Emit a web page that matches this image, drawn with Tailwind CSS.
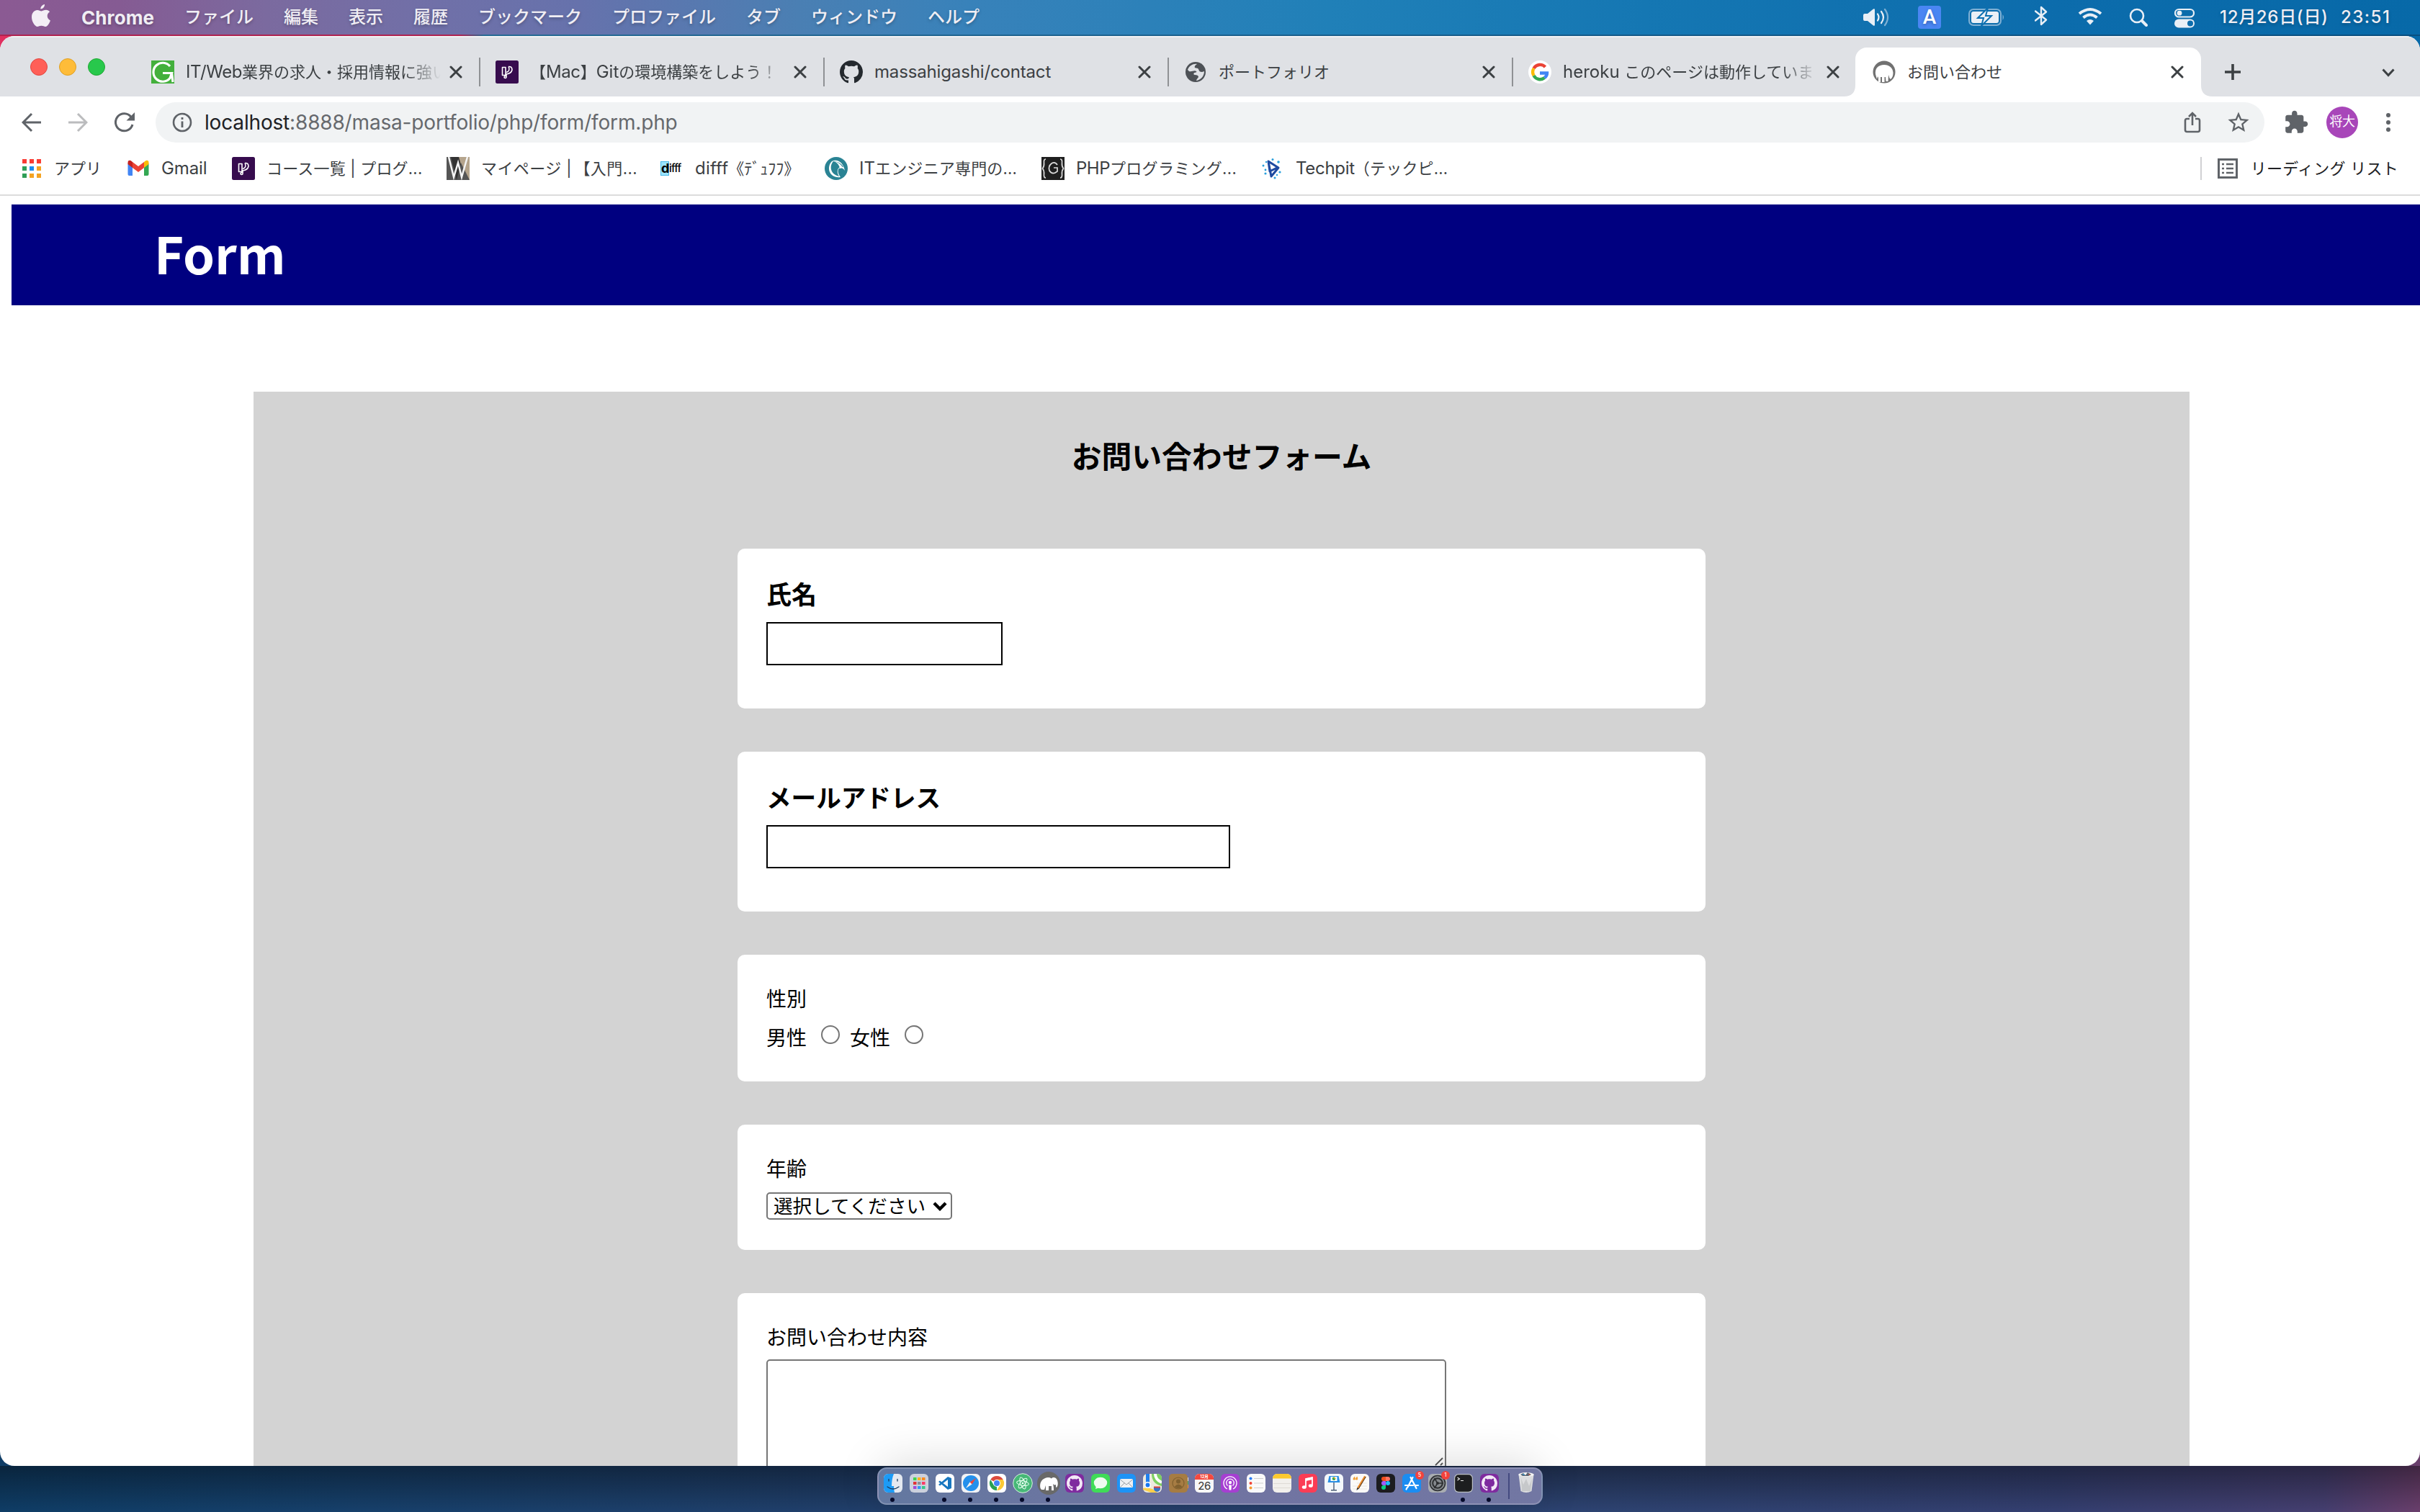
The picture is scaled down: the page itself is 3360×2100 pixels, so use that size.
<!DOCTYPE html>
<html lang="ja">
<head>
<meta charset="utf-8">
<title>お問い合わせ</title>
<script src="https://cdn.jsdelivr.net/npm/@tailwindcss/browser@4"></script>
</head>
<body class="w-[3360px] h-[2100px] overflow-hidden font-['Inter','Noto_Sans_CJK_JP',sans-serif]">
<svg class="hidden">
  <symbol id="x" viewBox="0 0 18 18"><path d="M2 2l14 14M16 2L2 16" stroke="#3c4043" stroke-width="3" stroke-linecap="round" fill="none"/></symbol>
  <symbol id="octocat" viewBox="0 0 16 16"><path fill="currentColor" d="M8 0C3.58 0 0 3.58 0 8c0 3.54 2.29 6.53 5.47 7.59.4.07.55-.17.55-.38 0-.19-.01-.82-.01-1.49-2.01.37-2.53-.49-2.69-.94-.09-.23-.48-.94-.82-1.13-.28-.15-.68-.52-.01-.53.63-.01 1.08.58 1.23.82.72 1.21 1.87.87 2.33.66.07-.52.28-.87.51-1.07-1.78-.2-3.64-.89-3.64-3.95 0-.87.31-1.59.82-2.15-.08-.2-.36-1.02.08-2.12 0 0 .67-.21 2.2.82.64-.18 1.32-.27 2-.27s1.36.09 2 .27c1.53-1.04 2.2-.82 2.2-.82.44 1.1.16 1.92.08 2.12.51.56.82 1.27.82 2.15 0 3.07-1.87 3.75-3.65 3.95.29.25.54.73.54 1.48 0 1.07-.01 1.93-.01 2.2 0 .21.15.46.55.38A8.01 8.01 0 0016 8c0-4.42-3.58-8-8-8z"/></symbol>
  <symbol id="progate" viewBox="0 0 32 32"><rect width="32" height="32" rx="2.5" fill="#370c4e"/><path d="M9.500 9.500h4.500v11h-4.500zM14 9.500v11l-2 2.500q0 1.500 1.500 1.500T15 23v-4q7-1 8-6 0-5-5-4.500" fill="none" stroke="#fff" stroke-width="1.600" stroke-linejoin="round"/><path d="M18 8.500q3 6-3 8" fill="none" stroke="#fff" stroke-width="1.500"/></symbol>
</svg>
<div class="w-full h-full flex flex-col bg-[linear-gradient(90deg,#0f3d66_0%,#16406b_14%,#233f6b_40%,#2c4472_62%,#343f70_85%,#453f70_96%,#6a3f6c_100%)]">

  <!-- menu bar -->
  <header class="h-12 shrink-0 flex items-center text-[#f0eef4] text-[24px] bg-[linear-gradient(90deg,#8b5a93_0%,#855b93_5%,#7b6a9f_11%,#7070a8_18%,#6672ac_24%,#4a7fb3_33%,#3882ba_40%,#2080b8_55%,#1577b3_68%,#0c6cac_85%,#0769a8_100%)] whitespace-nowrap font-medium [text-shadow:0_2px_4px_rgba(0,0,0,.25)]">
    <svg class="w-[26px] h-[32px] ml-[44px] mr-[43px] -mt-[4px]" viewBox="0 0 26 32"><path fill="#f3eef5" d="M18 0c.3 3-2.400 6.500-5.600 6.500C12 3.500 15 .4 18 0zM25 10.600c-5 3-4 9.800.9 11.800C24.600 26.500 21.700 31 19 31c-2 0-3-1.200-5.600-1.200C10.800 29.800 9.700 31 8 31 4.600 31 0 24.500 0 17.800 0 11.500 4 8 7.800 8c2.400 0 4 1.400 5.800 1.400C15.300 9.400 17 7.800 20 7.800c2 0 4 1 5 2.800z"/></svg>
    <span class="w-[143px] font-bold text-[26px] tracking-[0.100px]">Chrome</span>
    <nav class="flex gap-[42px]"><span>ファイル</span><span>編集</span><span>表示</span><span>履歴</span><span>ブックマーク</span><span>プロファイル</span><span>タブ</span><span>ウィンドウ</span><span>ヘルプ</span></nav>
    <div class="ml-auto flex items-center pr-[37px] -mt-px">
      <svg class="w-[38px] h-[28px] mr-[38px]" viewBox="0 0 38 28"><path d="M0 11a2 2 0 012-2h4l8-6.500q2-1 2 1v21q0 2-2 1L6 19H2a2 2 0 01-2-2z" fill="#e9eff6"/><path d="M20 9.500q3 4.500 0 9M25 6q6 8 0 16" fill="none" stroke="#e9eff6" stroke-width="2.200" stroke-linecap="round"/><path d="M30 3q8 11 0 22" fill="none" stroke="#7fb0d4" stroke-width="2.200" stroke-linecap="round"/></svg>
      <span class="w-8 h-8 rounded-[4px] bg-[#4a86f3] text-white text-[28px] leading-8 text-center mr-[38px] font-['Roboto']">A</span>
      <svg class="w-[52px] h-[26px] mr-[40px]" viewBox="0 0 52 26"><rect x="1" y="2" width="44" height="22" rx="6" fill="none" stroke="#7fb0d4" stroke-width="2"/><rect x="4" y="5" width="38" height="16" rx="3" fill="#e9eff6"/><path d="M47.500 9q3 4 0 8z" fill="#7fb0d4"/><path d="M27 0L13 14h8l-3 11L32 11h-8z" fill="#e9eff6" stroke="#0c6fb0" stroke-width="2"/></svg>
      <svg class="w-[18px] h-[28px] mr-[42px] -mt-[4px]" viewBox="0 0 18 28"><path d="M1 7.500l15 12-7 6.500V2l7 6.500-15 12" fill="none" stroke="#e9eff6" stroke-width="2.400" stroke-linejoin="round" stroke-linecap="round"/></svg>
      <svg class="w-[34px] h-[26px] mr-[37px] -mt-[2px]" viewBox="0 0 34 26"><g fill="none" stroke="#e9eff6" stroke-width="4"><path d="M2 9q15-12 30 0"/><path d="M7.500 14.500q9.500-8 19 0"/></g><path d="M12 19q5-4 10 0l-5 5.500z" fill="#e9eff6"/></svg>
      <svg class="w-[26px] h-[26px] mr-[37px]" viewBox="0 0 26 26"><circle cx="11" cy="11" r="9" fill="none" stroke="#e9eff6" stroke-width="2.600"/><path d="M18 18l6 6" stroke="#e9eff6" stroke-width="4" stroke-linecap="round"/></svg>
      <svg class="w-[28px] h-[28px] mr-[35px] mt-[2px]" viewBox="0 0 28 28"><rect x="1" y="2" width="26" height="10.500" rx="5.200" fill="none" stroke="#e9eff6" stroke-width="2.200"/><circle cx="7" cy="7.200" r="3.400" fill="#e9eff6"/><rect y="15.500" width="28" height="12" rx="6" fill="#e9eff6"/><circle cx="22" cy="21.500" r="4" fill="#0c6cac"/></svg>
      <span class="w-[168px] tracking-[0.700px]">12月26日(日)</span><span class="w-[73px] tracking-[1.500px]">23:51</span>
    </div>
  </header>
  <div class="h-[2px] shrink-0 bg-[linear-gradient(90deg,#b02350_0%,#b02350_19%,#266a94_20%,#0a4f80_100%)]"></div>

  <div class="h-[1986px] shrink-0 bg-[linear-gradient(90deg,#e03060_0,#e03060_30px,#0769a8_31px)] [background-size:100%_30px] bg-no-repeat">
  <!-- browser window -->
  <div class="h-full flex flex-col overflow-hidden rounded-[20px] bg-white">
    <!-- tab strip -->
    <div class="h-[84px] shrink-0 flex bg-[#dfe1e5] border-t-2 border-[#f1f1f3] text-[22px] text-[#3c4043] whitespace-nowrap">
      <div class="w-[210px] flex gap-4 pl-[42px] pt-[29px]">
        <i class="w-6 h-6 rounded-full bg-[#ff5f57] border border-[#e14640]"></i><i class="w-6 h-6 rounded-full bg-[#febc39] border border-[#dfa023]"></i><i class="w-6 h-6 rounded-full bg-[#28c84c] border border-[#1fa833]"></i>
      </div>
      <div class="w-[478px] flex items-center pt-[14px] h-[82px]">
        <svg class="w-8 h-8 shrink-0" viewBox="0 0 32 32"><path fill="#43b03c" d="M0 0h32v32H0z"/><path d="M26 8A13 13 0 1026 24.500L28.500 17.500H16M28.500 17.500L30 30" fill="none" stroke="#fff" stroke-width="3.200"/></svg>
        <div class="ml-4 w-[354px] overflow-hidden [mask-image:linear-gradient(90deg,#000_86%,transparent)]"><span class="text-[24px] tracking-[-0.400px]">IT/Web</span>業界の求人・採用情報に強い</div>
        <svg class="w-[18px] h-[18px] shrink-0 ml-3 mr-[23px]"><use href="#x"/></svg><i class="w-[2px] h-10 bg-[#8f9194]"></i>
      </div>
      <div class="w-[478px] flex items-center pt-[14px] h-[82px]">
        <svg class="w-8 h-8 shrink-0"><use href="#progate"/></svg>
        <div class="ml-4 w-[354px] overflow-hidden [mask-image:linear-gradient(90deg,#000_86%,transparent)]">【<span class="text-[24px] tracking-[-0.400px]">Mac</span>】<span class="text-[24px]">Git</span>の環境構築をしよう！</div>
        <svg class="w-[18px] h-[18px] shrink-0 ml-3 mr-[23px]"><use href="#x"/></svg><i class="w-[2px] h-10 bg-[#8f9194]"></i>
      </div>
      <div class="w-[478px] flex items-center pt-[14px] h-[82px]">
        <svg class="w-8 h-8 shrink-0 text-[#24292e]"><use href="#octocat"/></svg>
        <div class="ml-4 w-[354px] text-[24px] tracking-[-0.150px]">massahigashi/contact</div>
        <svg class="w-[18px] h-[18px] shrink-0 ml-3 mr-[23px]"><use href="#x"/></svg><i class="w-[2px] h-10 bg-[#8f9194]"></i>
      </div>
      <div class="w-[478px] flex items-center pt-[14px] h-[82px]">
        <svg class="w-8 h-8 shrink-0" viewBox="0 0 32 32"><circle cx="16" cy="16" r="14" fill="#4d5156"/><path d="M18 5c-2 1-4 3-3 5 2 1 4 0 5 2 1 3 2 4 5 4l3-1c0 7-5 12-11 13 0-2 2-3 3-5 0-2-2-3-5-3-2 0-2-2-1-3 2 0 4-1 3-2-3-2-6 1-10 0L5 13C7 7 13 4 18 5z" fill="#dfe1e5"/></svg>
        <div class="ml-4 w-[354px]">ポートフォリオ</div>
        <svg class="w-[18px] h-[18px] shrink-0 ml-3 mr-[23px]"><use href="#x"/></svg><i class="w-[2px] h-10 bg-[#8f9194]"></i>
      </div>
      <div class="w-[478px] flex items-center pt-[14px] h-[82px]">
        <svg class="w-8 h-8 shrink-0" viewBox="0 0 32 32"><circle cx="16" cy="16" r="16" fill="#fff"/><g fill="none" stroke-width="4.400"><path d="M23.500 9A10 10 0 007.500 11" stroke="#ea4335"/><path d="M7.500 11a10 10 0 000 10" stroke="#fbbc05"/><path d="M7.500 21a10 10 0 0015 3" stroke="#34a853"/><path d="M22.500 24c2.500-2 3.500-4 3.500-6.500H16" stroke="#4285f4"/></g></svg>
        <div class="ml-4 w-[354px] overflow-hidden [mask-image:linear-gradient(90deg,#000_86%,transparent)]"><span class="text-[24px]">heroku </span>このページは動作していま</div>
        <svg class="w-[18px] h-[18px] shrink-0 ml-3"><use href="#x"/></svg>
      </div>
      <div class="flex items-end -ml-[40px] mt-[14px] h-[68px]">
        <svg class="w-4 h-4" viewBox="0 0 16 16"><path d="M16 0v16H0Q16 16 16 0z" fill="#fff"/></svg>
        <div class="w-[480px] h-[68px] bg-white rounded-t-[16px] flex items-center pl-6">
          <svg class="w-8 h-8" viewBox="0 0 32 32"><circle cx="16" cy="16" r="15.500" fill="#717171"/><path d="M4 19c-1-8 4-13 12-13 7 0 12 4 12.500 11 0 4-1 7-3.500 9-2-1-2-4-3-6l-.5 9h-3l-.5-6h-1.500v7h-3.500v-7h-2v7h-3v-6l-1-2-1 4z" fill="#fff"/></svg>
          <div class="ml-4 w-[354px]">お問い合わせ</div>
          <svg class="w-[18px] h-[18px] ml-3"><use href="#x"/></svg>
        </div>
        <svg class="w-4 h-4" viewBox="0 0 16 16"><path d="M0 0v16h16Q0 16 0 0z" fill="#fff"/></svg>
      </div>
      <svg class="w-6 h-6 mt-[36px] ml-4" viewBox="0 0 24 24"><path d="M12 1v22M1 12h22" stroke="#3c4043" stroke-width="3.600"/></svg>
      <svg class="w-[18px] h-3 mt-[43px] ml-[195px]" viewBox="0 0 18 12"><path d="M1.500 1.500L9 9.500l7.500-8" stroke="#3c4043" stroke-width="3" fill="none"/></svg>
    </div>

    <!-- toolbar -->
    <div class="h-[72px] shrink-0 flex items-center">
      <svg class="w-7 h-7 ml-[30px] mr-[36px]" viewBox="0 0 28 28"><path d="M27 14H3M14 2L2 14l12 12" stroke="#5f6368" stroke-width="3" fill="none"/></svg>
      <svg class="w-7 h-7 mr-[37px]" viewBox="0 0 28 28"><path d="M1 14h24M14 2l12 12-12 12" stroke="#bbbcbe" stroke-width="3" fill="none"/></svg>
      <svg class="w-7 h-7 mr-[29px]" viewBox="0 0 28 28"><path d="M23 6.500A12 12 0 1025 17" stroke="#5f6368" stroke-width="3" fill="none"/><path d="M28 0v11.500H16.500z" fill="#5f6368"/></svg>
      <div class="w-[2928px] h-14 rounded-full bg-[#f1f3f4] flex items-center">
        <svg class="w-7 h-7 ml-[23px] mr-[17px]" viewBox="0 0 28 28"><circle cx="14" cy="14" r="12" fill="none" stroke="#5f6368" stroke-width="2.600"/><path d="M14 12.500V21M14 7v3" stroke="#5f6368" stroke-width="2.800"/></svg>
        <span class="text-[28px] text-[#66696d] tracking-[-0.170px]"><span class="text-[#202124]">localhost</span>:8888/masa-portfolio/php/form/form.php</span>
        <svg class="w-[24px] h-[30px] ml-auto mr-[36px]" viewBox="0 0 24 30"><path d="M8 10H4.500Q2 10 2 12.500v13Q2 28 4.500 28h15q2.500 0 2.500-2.500v-13Q22 10 19.500 10H16M12 19V3M7 7l5-5 5 5" fill="none" stroke="#5f6368" stroke-width="2.600"/></svg>
        <svg class="w-[32px] h-[32px] mr-[20px]" viewBox="1 1 22 22"><path fill="#5f6368" d="M22 9.240l-7.190-.62L12 2 9.190 8.630 2 9.240l5.460 4.730L5.820 21 12 17.270 18.180 21l-1.630-7.030L22 9.240zM12 15.400l-3.760 2.270 1-4.280-3.320-2.880 4.380-.38L12 6.100l1.710 4.040 4.380.38-3.320 2.880 1 4.280L12 15.400z"/></svg>
      </div>
      <svg class="w-[34px] h-[34px] ml-[27px]" viewBox="0.500 0.500 23 23"><path fill="#5f6368" d="M20.500 11H19V7c0-1.100-.9-2-2-2h-4V3.500C13 2.120 11.880 1 10.500 1S8 2.120 8 3.500V5H4c-1.100 0-1.990.9-1.990 2v3.800H3.500c1.490 0 2.700 1.210 2.700 2.700s-1.210 2.700-2.700 2.700H2V20c0 1.100.9 2 2 2h3.800v-1.500c0-1.490 1.210-2.700 2.700-2.700 1.490 0 2.700 1.210 2.700 2.700V22H17c1.100 0 2-.9 2-2v-4h1.500c1.380 0 2.500-1.120 2.500-2.500S21.880 11 20.500 11z"/></svg>
      <span class="ml-[25px] w-11 h-11 rounded-full bg-[#a846b9] text-white text-[18px] leading-[42px] text-center tracking-[-0.500px]">将大</span>
      <svg class="w-[6px] h-[28px] ml-[39px]" viewBox="0 0 6 28"><g fill="#5f6368"><circle cx="3" cy="4" r="3"/><circle cx="3" cy="14" r="3"/><circle cx="3" cy="24" r="3"/></g></svg>
    </div>

    <!-- bookmarks bar -->
    <div class="h-[66px] shrink-0 flex items-center pb-[8px] border-b-2 border-[#dcdcdc] text-[22px] text-[#3c4043] whitespace-nowrap pl-[31px]">
      <div class="flex items-center w-[145px]"><svg class="w-[26px] h-[26px] mr-[18px]" viewBox="0 0 26 26"><path fill="#f93c34" d="M0 0h6v6H0zM10 0h6v6h-6zM20 0h6v6h-6z"/><path fill="#2f9e57" d="M0 10h6v6H0zM0 20h6v6H0z"/><path fill="#1a8cf0" d="M10 10h6v6h-6z"/><path fill="#f4a322" d="M20 10h6v6h-6zM10 20h6v6h-6zM20 20h6v6h-6z"/></svg>アプリ</div>
      <div class="flex items-center w-[146px]"><svg class="w-[32px] h-[24px] mr-[16px]" viewBox="0 0 32 24"><path fill="#4285f4" d="M1.500 5v15q0 2 2 2H8V10z"/><path fill="#34a853" d="M30.500 5v15q0 2-2 2H24V10z"/><path fill="#ea4335" d="M8 3v8l8 6 8-6V3l-8 6z"/><path fill="#c5221f" d="M1.500 4q0-4 4-3L8 3v8L1.500 6z"/><path fill="#fbbc04" d="M30.500 4q0-4-4-3L24 3v8l6.500-5z"/></svg><span class="text-[24px] tracking-[-0.100px]">Gmail</span></div>
      <div class="flex items-center w-[298px]"><svg class="w-8 h-8 mr-4"><use href="#progate"/></svg><span class="tracking-[0.200px]">コース一覧<span class="whitespace-pre"> | </span>プログ...</span></div>
      <div class="flex items-center w-[297px]"><svg class="w-8 h-8 mr-4" viewBox="0 0 32 32"><path fill="#333" d="M0 0h32v32H0z"/><path d="M17 0h15v32h-6z" fill="#b5a48c"/><path fill="#555" d="M0 0h6L14 32H0zM20 8l12 24H14z"/><path d="M3 0l7 28 6-20 5 20 8-28" fill="none" stroke="#f4f4f4" stroke-width="2.500"/></svg><span class="tracking-[0.400px]">マイページ<span class="whitespace-pre"> | </span><span class="-ml-[3px]">【入門...</span></span></div>
      <div class="flex items-center w-[228px]"><span class="w-[32px] mr-[16px] text-black flex items-center text-[15px] leading-[20px] tracking-[-0.800px]"><b class="bg-[#9be4ff] border border-[#49b9e6] w-[12px] shrink-0 text-[18px] h-[20px] leading-[17px]">d</b><span class="font-medium">ifff</span></span><span class="text-[24px] tracking-[0.200px]">difff</span>《ﾃﾞｭﾌﾌ》</div>
      <div class="flex items-center w-[301px]"><svg class="w-8 h-8 mr-4" viewBox="0 0 32 32"><circle cx="16" cy="16" r="16" fill="#2a8394"/><path d="M22 28C6 30 2 14 10 6c8-4 16 2 18 13-2-3-4-4-6-4-5 1-4 8 0 13z" fill="#fff"/><path d="M20 27C8 24 6 13 12 6c7 0 12 4 14 8-7-2-11 5-6 13z" fill="#2a8394"/><path d="M13 6q9 2 12 9l-4 1Q20 9 13 6z" fill="#fff"/></svg><span class="text-[24px]">IT</span><span class="tracking-[0.200px]">エンジニア専門の...</span></div>
      <div class="flex items-center w-[305px]"><svg class="w-8 h-8 mr-4" viewBox="0 0 32 32"><path fill="#1f1f1f" d="M0 0h32v32H0z"/><path d="M6 3Q3 3 3.500 8t-2 8q2.500 3 2 8t2.500 5M26 3q3 0 2.500 5t2 8q-2.500 3-2 8t-2.500 5M22 11q-3-5-8-2-5 4-3 10 3 5 8 3l3-2v-5h-5" fill="none" stroke="#ddd" stroke-width="1.700"/></svg><span class="text-[24px] tracking-[-0.500px]">PHP</span><span class="tracking-[0.300px]">プログラミング...</span></div>
      <div class="flex items-center"><svg class="w-8 h-8 mr-4" viewBox="0 0 32 32"><path d="M10 6l14 9-10 12zM10 6l2 14 10-5" fill="none" stroke="#1f4aa0" stroke-width="3" stroke-linejoin="round"/><g fill="#2aa0dc"><circle cx="16" cy="3.500" r="1.500"/><circle cx="24" cy="7" r="1.800"/><circle cx="3" cy="12" r="1.500"/><circle cx="6" cy="18" r="1.400"/><circle cx="7" cy="7" r="1.200"/><circle cx="26" cy="21" r="1.600"/><circle cx="6" cy="23" r="1.600"/><circle cx="19" cy="29" r="1.500"/><circle cx="22" cy="25" r="1.200"/></g></svg><span class="text-[24px] tracking-[-0.300px]">Techpit</span><span class="tracking-[0.200px] -ml-px">（テックピ...</span></div>
      <div class="ml-auto flex items-center text-[#202124] pr-[30px]"><i class="w-[2px] h-8 bg-[#d0d1d3] mr-[22px]"></i><svg class="w-7 h-7 mr-[18px]" viewBox="0 0 28 28"><rect x="1.500" y="1.500" width="25" height="25" fill="none" stroke="#5f6368" stroke-width="3"/><path d="M6 8h3M6 14h3M6 20h3M12 8h10M12 14h10M12 20h10" stroke="#5f6368" stroke-width="2.600"/></svg><span class="tracking-[0.250px]">リーディング リスト</span></div>
    </div>

    <!-- page -->
    <main class="flex-1 overflow-hidden pl-4 pt-3 text-black font-['Noto_Sans_CJK_JP',sans-serif]">
      <div class="h-[140px] bg-[#000080] flex items-center pl-[198px] text-white font-bold text-[70.500px] leading-[140px]"><h1 class="-mt-[8px]">Form</h1></div>
      <form class="mt-[120px] ml-[336px] w-[2688px] h-[1600px] bg-[#d3d3d3] pt-[58px] flex flex-col items-center text-[28px] leading-10">
        <h2 class="h-[60px] shrink-0 leading-[60px] mb-[100px] text-[41.800px] font-bold">お問い合わせフォーム</h2>
        <section class="w-[1344px] h-[222px] shrink-0 bg-white rounded-[10px] px-10 pt-[38px] mb-[60px]">
          <h3 class="h-12 leading-[48px] text-[35px] font-bold mb-[16px]">氏名</h3>
          <input class="block w-[328px] h-[60px] border-2 border-black bg-white">
        </section>
        <section class="w-[1344px] h-[222px] shrink-0 bg-white rounded-[10px] px-10 pt-[38px] mb-[60px]">
          <h3 class="h-12 leading-[48px] text-[34.600px] font-bold mb-[16px]">メールアドレス</h3>
          <input class="block w-[644px] h-[60px] border-2 border-black bg-white">
        </section>
        <section class="w-[1344px] h-[176px] shrink-0 bg-white rounded-[10px] px-10 pt-10 mb-[60px]">
          <p class="h-10 mb-[14px]">性別</p>
          <div class="flex h-10"><span class="w-[76px]">男性</span><i class="w-[26px] h-[26px] mt-[4px] mr-[14px] rounded-full border-2 border-[#767676] bg-white"></i><span class="w-[76px]">女性</span><i class="w-[26px] h-[26px] mt-[4px] rounded-full border-2 border-[#767676] bg-white"></i></div>
        </section>
        <section class="w-[1344px] h-[174px] shrink-0 bg-white rounded-[10px] px-10 pt-10 mb-[60px]">
          <p class="h-10 mb-[14px]">年齢</p>
          <div class="w-[258px] h-[38px] border-2 border-[#767676] rounded-[5px] flex items-center pl-2 text-[26.600px] leading-[34px] whitespace-nowrap"><span class="w-[221px] -mt-[2px]">選択してください</span><svg class="w-[20px] h-[14px]" viewBox="0 0 20 14"><path d="M2 3l8 8 8-8" fill="none" stroke="#000" stroke-width="4.400"/></svg></div>
        </section>
        <section class="w-[1344px] h-[600px] shrink-0 bg-white rounded-[10px] px-10 pt-10">
          <p class="h-10 mb-3">お問い合わせ内容</p>
          <div class="w-[944px] h-[152px] border-2 border-[#767676] rounded-[5px] flex items-end justify-end pr-[2px] pb-[2px]"><svg class="w-[12px] h-[12px]" viewBox="0 0 12 12"><path d="M1 11L11 1M8 11l3-3" stroke="#555" stroke-width="1.800"/></svg></div>
        </section>
      </form>
    </main>
  </div>
  </div>

  <!-- dock -->
  <footer class="h-16 shrink-0 pt-[2px] flex justify-center bg-gradient-to-b from-black/40 to-black/0">
    <div class="relative w-[924px] h-[52px] rounded-[13px] border-2 border-white/20 bg-[linear-gradient(90deg,#6378a0,#7073a1_45%,#7277a3)] shadow-[0_-6px_64px_-8px_rgba(0,0,0,.22)] flex gap-[10px] pl-[7px] pt-[7px]">
      <div class="relative w-[26px] h-[26px]"><svg viewBox="0 0 26 26"><rect width="26" height="26" rx="6" fill="#e4e9f0"/><path d="M14 0H6a6 6 0 00-6 6v14a6 6 0 006 6h9q-1-4-1-9h-3q0-10 3-17z" fill="#1c9bf6"/><path d="M7 7.500v2.500M19 7.500v2.500M5 18q8 6 16 0" stroke="#173a5c" stroke-width="1.300" fill="none" stroke-linecap="round"/></svg><i class="absolute left-[9px] top-[33px] w-[6px] h-[6px] rounded-full bg-[#050a2a]"></i></div>
      <svg class="w-[26px] h-[26px]" viewBox="0 0 26 26"><rect width="26" height="26" rx="6" fill="#ccd1dd"/><path fill="#40d14e" d="M5 5h4.500v4H5z"/><path fill="#fbb320" d="M11 5h4.500v4H11z"/><path fill="#fb8a20" d="M17 5h4.500v4H17z"/><path fill="#e23535" d="M5 11h4.500v4H5z"/><path fill="#8c8f96" d="M11 11h4.500v4H11z"/><path fill="#fb3b66" d="M17 11h4.500v4H17z"/><path fill="#a24bd6" d="M5 17h4.500v4H5z"/><path fill="#2e9bf5" d="M11 17h4.500v4H11z"/><path fill="#37c68b" d="M17 17h4.500v4H17z"/></svg>
      <div class="relative w-[26px] h-[26px]"><svg viewBox="0 0 26 26"><rect width="26" height="26" rx="6" fill="#fff"/><path d="M17 4l5 2v14l-5 2L4 11l2-1.500L17 18V8L6 16.500 4 15z" fill="#1777c0"/></svg><i class="absolute left-[9px] top-[33px] w-[6px] h-[6px] rounded-full bg-[#050a2a]"></i></div>
      <div class="relative w-[26px] h-[26px]"><svg viewBox="0 0 26 26"><rect width="26" height="26" rx="6" fill="#f2f3f5"/><circle cx="13" cy="13" r="11" fill="#2490ec"/><path d="M20 6l-5.500 8.500L11.500 11.500z" fill="#f0453a"/><path d="M6 20l5.500-8.500 3 3z" fill="#f5f5f5"/></svg><i class="absolute left-[9px] top-[33px] w-[6px] h-[6px] rounded-full bg-[#050a2a]"></i></div>
      <div class="relative w-[26px] h-[26px]"><svg viewBox="0 0 26 26"><rect width="26" height="26" rx="6" fill="#fff"/><path d="M13 13L4.300 8a10 10 0 0117.400 0H13z" fill="#dd4b3e"/><path d="M13 13v10A10 10 0 014.300 8l4.400 7.500z" fill="#2aa152"/><path d="M13 8h8.700A10 10 0 0113 23l4.300-7.500z" fill="#fcc934"/><circle cx="13" cy="13" r="5" fill="#fff"/><circle cx="13" cy="13" r="4" fill="#4285f4"/></svg><i class="absolute left-[9px] top-[33px] w-[6px] h-[6px] rounded-full bg-[#050a2a]"></i></div>
      <div class="relative w-[26px] h-[26px]"><svg class="overflow-visible" viewBox="0 0 26 26"><circle cx="13" cy="13" r="13.300" fill="#46b877" stroke="#dcefe2" stroke-width="1"/><g fill="none" stroke="#e8fff0" stroke-width="1"><ellipse cx="13" cy="13" rx="8.500" ry="3.200" transform="rotate(10 13 13)"/><ellipse cx="13" cy="13" rx="8.500" ry="3.200" transform="rotate(70 13 13)"/><ellipse cx="13" cy="13" rx="8.500" ry="3.200" transform="rotate(130 13 13)"/></g><circle cx="13" cy="13" r="1.300" fill="#fff"/></svg><i class="absolute left-[9px] top-[33px] w-[6px] h-[6px] rounded-full bg-[#050a2a]"></i></div>
      <div class="relative w-[26px] h-[26px]"><svg class="overflow-visible" viewBox="0 0 26 26"><circle cx="13" cy="13" r="16" fill="#696969"/><path d="M1.500 20C0 13 3 8 8 6q5-2 9 .5c2-2.500 6-1.500 7.500 1.500 2 4 1.500 9-.5 11-1 0-1-2-1-4-2 1-3 0-4-1 1 4 1 7 1 9h-3v-6h-4v6h-4v-7l-2 6H3z" fill="#fff"/></svg><i class="absolute left-[9px] top-[33px] w-[6px] h-[6px] rounded-full bg-[#050a2a]"></i></div>
      <div class="w-[26px] h-[26px] rounded-[6px] bg-[#7f2b9f] p-[2px] text-[#f2e8f6]"><svg class="w-[22px] h-[22px]"><use href="#octocat"/></svg></div>
      <svg class="w-[26px] h-[26px]" viewBox="0 0 26 26"><rect width="26" height="26" rx="6" fill="#3fdc57"/><ellipse cx="13" cy="12.500" rx="9.200" ry="7.800" fill="#eefbef"/><path d="M7 17l-1 4 6-2z" fill="#eefbef"/></svg>
      <svg class="w-[26px] h-[26px]" viewBox="0 0 26 26"><rect width="26" height="26" rx="6" fill="#1d93f6"/><rect x="4" y="7" width="18" height="12" rx="1.500" fill="#eef0f2"/><path d="M4.500 8l8.500 7 8.500-7M4.500 18.500l6-6M21.500 18.500l-6-6" fill="none" stroke="#8f969d" stroke-width=".9"/></svg>
      <svg class="w-[26px] h-[26px]" viewBox="0 0 26 26"><rect width="26" height="26" rx="6" fill="#eceadf"/><path d="M12 0h8q6 0 6 6v11Q12 14 12 0z" fill="#7ed061"/><path d="M17 0q0 8 9 12" stroke="#fff" stroke-width="4" fill="none"/><path d="M0 20q12-2 20 6h-9L0 22z" fill="#fbcf4b"/><path d="M4 0h5v14H4z" fill="#2080ee"/><circle cx="6.500" cy="15.500" r="3.700" fill="#1878f0" stroke="#fff" stroke-width="1.500"/><path d="M15 18h9q1 6-4.500 7Q14 24 15 18z" fill="#3574c5"/><path d="M15 17.500h9v2h-9z" fill="#d8433b"/></svg>
      <svg class="w-[26px] h-[26px] overflow-visible" viewBox="0 0 26 26"><path d="M25 5h2v5h-2z" fill="#ddd"/><path d="M25 10h2v5h-2z" fill="#43b35e"/><path d="M25 15h2v5h-2z" fill="#ee8b34"/><rect width="26" height="26" rx="5" fill="#a67c43"/><circle cx="13" cy="13" r="8" fill="none" stroke="#80602f" stroke-width="1.200"/><circle cx="13" cy="10.500" r="3" fill="#80602f"/><path d="M7.500 18q5.500-7 11 0-5.500 4.500-11 0z" fill="#80602f"/></svg>
      <div class="w-[26px] h-[26px] rounded-[6px] bg-[#f7f7f7] overflow-hidden text-center"><div class="h-2 bg-[#f4493f] text-white text-[5.500px] leading-[8px] font-bold">12月</div><div class="text-[15px] leading-[17px] text-[#333] tracking-[-0.500px]">26</div></div>
      <svg class="w-[26px] h-[26px]" viewBox="0 0 26 26"><rect width="26" height="26" rx="6" fill="#a63fd2"/><g fill="none" stroke="#fff" stroke-width="1.300"><path d="M9 21a9 9 0 118 0"/><path d="M9.500 16.500a5.300 5.300 0 117 0"/></g><circle cx="13" cy="12" r="2.200" fill="#fff"/><path d="M11 15.500h4l-.6 7h-2.800z" fill="#fff"/></svg>
      <svg class="w-[26px] h-[26px]" viewBox="0 0 26 26"><rect width="26" height="26" rx="6" fill="#fafafa"/><path d="M10 6.500h13M10 13h13M10 19.500h13" stroke="#cfcfcf"/><circle cx="5.500" cy="6.500" r="2" fill="#2b7df4"/><circle cx="5.500" cy="13" r="2" fill="#f04438"/><circle cx="5.500" cy="19.500" r="2" fill="#f59b31"/></svg>
      <svg class="w-[26px] h-[26px]" viewBox="0 0 26 26"><rect width="26" height="26" rx="6" fill="#f2f0ec"/><path d="M0 6.500V6a6 6 0 016-6h14a6 6 0 016 6v.5z" fill="#fdc92e"/><path d="M1 13.500h24M1 19.500h24" stroke="#dedbd5"/></svg>
      <svg class="w-[26px] h-[26px]" viewBox="0 0 26 26"><rect width="26" height="26" rx="6" fill="#fb3d55"/><path d="M10 18.500V7l9-2v11.500" fill="none" stroke="#fff" stroke-width="1.800"/><path d="M10 6.500l9-2V8l-9 2z" fill="#fff"/><ellipse cx="7.800" cy="18.500" rx="3" ry="2.300" fill="#fff"/><ellipse cx="16.800" cy="16.500" rx="3" ry="2.300" fill="#fff"/></svg>
      <svg class="w-[26px] h-[26px]" viewBox="0 0 26 26"><rect width="26" height="26" rx="6" fill="#f5f8fb"/><path d="M6.500 3h13l2 9h-17z" fill="#2a8fe3"/><path d="M8.500 4h9v6h-9z" fill="#fff"/><circle cx="13" cy="6.800" r="2.300" fill="#34a853"/><path d="M13 4.500a2.300 2.300 0 012.300 2.300H13z" fill="#f4a322"/><path d="M13 12v10.500M9 22.800h8" stroke="#4b5c75" stroke-width="1.400"/></svg>
      <svg class="w-[26px] h-[26px]" viewBox="0 0 26 26"><rect width="26" height="26" rx="6" fill="#fbfaf8"/><path d="M9 13h14M3 17h20M3 21h20" stroke="#e6e2dc" stroke-width=".8"/><path d="M6 4q-2 1-2 4h2.200V5.800H5.400zM9.500 4q-2 1-2 4h2.200V5.800H9z" fill="#f39a2b" stroke="#f39a2b" stroke-width=".8"/><path d="M20.500 3.500L10.500 20" stroke="#ee8a26" stroke-width="3"/><path d="M21.300 4L11.300 20.500" stroke="#3e3a36" stroke-width="1"/><path d="M9.300 19l2.500 1.600L8.500 23z" fill="#333"/></svg>
      <svg class="w-[26px] h-[26px]" viewBox="0 0 26 26"><rect width="26" height="26" rx="6" fill="#1c1c1f"/><path d="M13 4H10a3 3 0 000 6h3z" fill="#f24e1e"/><path d="M13 4h3a3 3 0 010 6h-3z" fill="#ff7262"/><path d="M13 10h-3a3 3 0 000 6h3z" fill="#a259ff"/><circle cx="16" cy="13" r="3" fill="#1abcfe"/><path d="M13 16h-3a3 3 0 103 3z" fill="#0acf83"/></svg>
      <div class="relative w-[26px] h-[26px]"><svg viewBox="0 0 26 26"><rect width="26" height="26" rx="6" fill="#1a8df2"/><path d="M14.500 5L7.500 18.500M11.500 5l8 15M4 16h11M18 16h4M6.500 19.500l-1 2" stroke="#fff" stroke-width="2.200" stroke-linecap="round" fill="none"/></svg><b class="absolute left-[18px] -top-[4px] w-[12px] h-[12px] rounded-full bg-[#f2423c] text-white text-[7px] leading-[12px] text-center font-medium">5</b></div>
      <div class="relative w-[26px] h-[26px]"><svg viewBox="0 0 26 26"><rect width="26" height="26" rx="6" fill="#a9adb1"/><circle cx="13" cy="13" r="10.500" fill="#85898d" stroke="#2d2f31" stroke-width="1.600"/><circle cx="13" cy="13" r="6.800" fill="none" stroke="#2d2f31" stroke-width="2"/><path d="M13 13h8M13 13L8.500 6M13 13L8.500 20" stroke="#2d2f31" stroke-width="1.600"/><circle cx="13" cy="13" r="2" fill="#2d2f31"/></svg><b class="absolute left-[18px] -top-[4px] w-[12px] h-[12px] rounded-full bg-[#f2423c] text-white text-[7px] leading-[12px] text-center font-medium">1</b></div>
      <div class="relative w-[26px] h-[26px]"><svg viewBox="0 0 26 26"><rect width="26" height="26" rx="6" fill="#b9bec3"/><rect x="1.200" y="1.200" width="23.600" height="23.600" rx="5" fill="#1d1e1f"/><path d="M4.500 5l3 2-3 2M9 9.500h4" stroke="#eee" stroke-width="1.100" fill="none"/></svg><i class="absolute left-[9px] top-[33px] w-[6px] h-[6px] rounded-full bg-[#050a2a]"></i></div>
      <div class="relative w-[26px] h-[26px] rounded-[6px] bg-[#7f2b9f] p-[2px] text-[#f2e8f6]"><svg class="w-[22px] h-[22px]"><use href="#octocat"/></svg><i class="absolute left-[9px] top-[33px] w-[6px] h-[6px] rounded-full bg-[#050a2a]"></i></div>
      <i class="w-[2px] h-9 bg-[#444a80] ml-[3px] -mt-px"></i>
      <svg class="w-[26px] h-[32px] -mt-[4px]" viewBox="0 0 26 32"><path d="M2.500 5h21l-3 23q-7.500 4-15 0z" fill="#dcdddf"/><path d="M6 10l3 9 4-8 4 10 4-10-2 17H7z" fill="#c6c8ca"/><ellipse cx="13" cy="5" rx="10.800" ry="3" fill="#f4f4f4"/><path d="M5 5l4-2 3 3 3-4 5 3-4 2H8z" fill="#5c6470"/><path d="M7 5l3-1 1 2z" fill="#2e9fe0"/><path d="M16 4l3 1-2 1z" fill="#d9503f"/></svg>
    </div>
  </footer>
</div>
</body>
</html>
